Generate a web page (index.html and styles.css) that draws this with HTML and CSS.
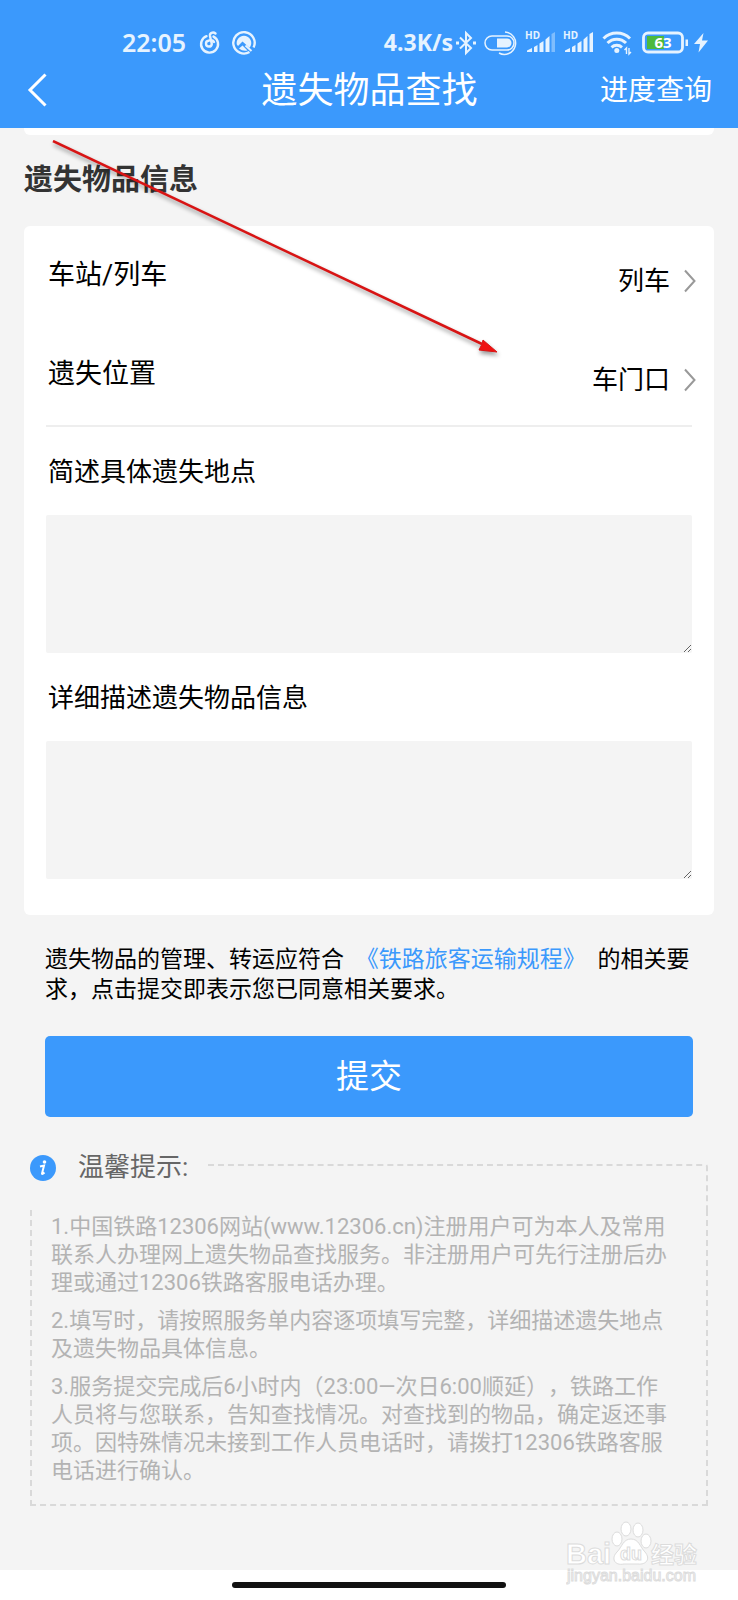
FILE: index.html
```html
<!DOCTYPE html>
<html lang="zh-CN">
<head>
  <title>遗失物品查找</title>
  <meta name="viewport" content="width=device-width, initial-scale=1.0">
  <meta charset="UTF-8">
  <link rel="stylesheet" href="styles.css">
</head>
<body>
  <header class="header">
    <div class="status-bar">
      <span class="status-text clock">22:05</span>
      <svg class="icon-music" width="20" height="24" viewBox="0 0 20 24" fill="none" stroke="currentColor" stroke-width="2.400" stroke-linecap="round">
        <path d="M6.500 5.200A8.500 8.500 0 1 0 13.500 5.600"/>
        <path d="M15.500 2.500C13 .5 9.400 2 10 5L11.800 13A2.900 2.900 0 1 1 8.500 9.800C10.500 8.600 13 9 14 11"/>
      </svg>
      <svg class="icon-app" width="24" height="24" viewBox="0 0 24 24" fill="none" stroke="currentColor">
        <path d="M17.500 21A10.700 10.700 0 1 1 21.600 16.500" stroke-width="2.400"/>
        <path d="M4.800 13.500A7.300 7.300 0 1 1 17.500 16.800L10.500 10.500L6 15Z" fill="currentColor" stroke="none"/>
        <path d="M7 17.500L10.500 14.500L15.500 19.500Q10.500 20.500 7 17.500Z" fill="currentColor" stroke="none"/>
        <path d="M13.500 14.500L19.500 20" stroke-width="2"/>
      </svg>
      <span class="status-text net-speed">4.3K/s</span>
      <svg class="icon-bluetooth" width="20" height="24" viewBox="0 0 20 24" fill="none" stroke="currentColor" stroke-width="2">
        <path d="M4 6.500L15 17L10 22V2L15 7L4 17.500"/>
        <path d="M0 10.500H3V13.500H0ZM17 10.500H20V13.500H17Z" fill="currentColor" stroke="none"/>
      </svg>
      <svg class="icon-switch" width="34" height="24" viewBox="0 0 34 24" fill="none" stroke="currentColor">
        <rect x="1" y="5" width="29" height="14" rx="7" stroke-width="1.500"/>
        <path d="M13 7.500H23A4.500 4.500 0 0 1 23 16.500H13Z" fill="currentColor" stroke="none"/>
        <path d="M21 1A11.200 11.200 0 1 1 15 22" stroke-width="1.500"/>
      </svg>
      <svg class="icon-signal" width="30" height="24" viewBox="0 0 30 24" fill="currentColor">
        <text x="-1" y="8" class="hd">HD</text>
        <path d="M1 21V19.500L6 17V21ZM8 21V16L11.500 14V21ZM13.500 21V12.500L17.500 10V21ZM19.500 21V8.500L23.500 5V21Z"/>
        <path d="M25.500 21V3L29 1V21Z" opacity=".4"/>
      </svg>
      <svg class="icon-signal" width="30" height="24" viewBox="0 0 30 24" fill="currentColor">
        <text x="-1" y="8" class="hd">HD</text>
        <path d="M1 21V19.500L6 17V21ZM8 21V16L11.500 14V21ZM13.500 21V12.500L17.500 10V21ZM19.500 21V8.500L23.500 5V21ZM25.500 21V3L29 1V21Z"/>
      </svg>
      <svg class="icon-wifi" width="30" height="24" viewBox="0 0 30 24" fill="none" stroke="currentColor" stroke-width="3">
        <path d="M1.500 7.500A19 19 0 0 1 28 7.500M5.500 12A13 13 0 0 1 24 12M9.500 16.300A8 8 0 0 1 20 16.300"/>
        <circle cx="14.800" cy="19.500" r="2.500" fill="currentColor" stroke="none"/>
        <path d="M24.500 23V17L22.500 19M27 17V23L29 21" stroke-width="1.400"/>
      </svg>
      <svg class="icon-battery" width="46" height="24" viewBox="0 0 46 24" fill="none">
        <rect x="5" y="5" width="17" height="13" fill="#4cb93c"/>
        <rect x="1.500" y="2" width="39" height="19" rx="4.500" stroke="currentColor" stroke-width="2.800"/>
        <path d="M43.500 8.500H46V15H43.500Z" fill="currentColor"/>
        <text x="21" y="17" text-anchor="middle" fill="#fff" class="level">63</text>
      </svg>
      <svg class="icon-bolt" width="14" height="24" viewBox="0 0 14 24" fill="currentColor">
        <path d="M9.500 2L0 13H6L4.500 21.500L14 9.500H8Z"/>
      </svg>
    </div>
    <nav class="nav">
      <button class="back-btn" title="返回">
        <svg width="20" height="34" viewBox="0 0 20 34" fill="none" stroke="currentColor" stroke-width="3"><path d="M18.500 1.500L3 17L18.500 32.500"/></svg>
      </button>
      <h1 class="nav-title">遗失物品查找</h1>
      <a class="nav-link" href="#progress">进度查询</a>
    </nav>
  </header>

  <main class="main">
    <div class="prev-card"></div>
    <h2 class="section-title">遗失物品信息</h2>

    <form class="card" id="lost-form">
      <div class="row">
        <label class="row-label" for="place">车站/列车</label>
        <button type="button" class="picker" id="place">
          列车
          <svg width="12" height="24" viewBox="0 0 12 24" fill="none" stroke="currentColor" stroke-width="2"><path d="M1 1.500L10.500 12L1 22.500"/></svg>
        </button>
      </div>
      <div class="row row-line">
        <label class="row-label" for="position">遗失位置</label>
        <button type="button" class="picker" id="position">
          车门口
          <svg width="12" height="24" viewBox="0 0 12 24" fill="none" stroke="currentColor" stroke-width="2"><path d="M1 1.500L10.500 12L1 22.500"/></svg>
        </button>
      </div>
      <div class="field">
        <label for="spot">简述具体遗失地点</label>
        <textarea id="spot"></textarea>
      </div>
      <div class="field">
        <label for="detail">详细描述遗失物品信息</label>
        <textarea id="detail"></textarea>
      </div>
    </form>

    <div class="submit-area">
      <p class="agreement">遗失物品的管理、转运应符合 <a href="#rules">《铁路旅客运输规程》</a> 的相关要求，点击提交即表示您已同意相关要求。</p>
      <button class="submit-btn" type="submit" form="lost-form">提交</button>
    </div>

    <section class="tips">
      <div class="tips-head">
        <svg class="info-icon" width="26" height="26" viewBox="0 0 26 26">
          <circle cx="13" cy="13" r="13" fill="#3b99fc"/>
          <circle cx="14.500" cy="7" r="1.800" fill="#fff"/>
          <path d="M10 11.500L14 10.500L12 18.500Q12 19.800 14.500 17.500" fill="none" stroke="#fff" stroke-width="2"/>
        </svg>
        <h3 class="tips-title">温馨提示:</h3>
        <div class="tips-line"></div>
      </div>
      <div class="tips-body">
        <p>1.中国铁路12306网站(www.12306.cn)注册用户可为本人及常用联系人办理网上遗失物品查找服务。非注册用户可先行注册后办理或通过12306铁路客服电话办理。</p>
        <p>2.填写时，请按照服务单内容逐项填写完整，详细描述遗失地点及遗失物品具体信息。</p>
        <p>3.服务提交完成后6小时内（23:00—次日6:00顺延），铁路工作人员将与您联系，告知查找情况。对查找到的物品，确定返还事项。因特殊情况未接到工作人员电话时，请拨打12306铁路客服电话进行确认。</p>
      </div>
    </section>
  </main>

  <footer class="home-area">
    <div class="home-bar"></div>
    <svg class="watermark" width="136" height="66" viewBox="0 0 136 66">
      <g fill="#fff" stroke="#dcdcdc">
        <text x="0" y="43" class="wm-name">Bai</text>
        <ellipse cx="51" cy="18" rx="5" ry="7"/>
        <ellipse cx="60" cy="8" rx="5" ry="7"/>
        <ellipse cx="72" cy="9" rx="5" ry="7"/>
        <ellipse cx="80" cy="20" rx="5" ry="7"/>
        <path d="M65 18C73 18 74 26 79 31C85 38 80 44 72 43H58C48 45 45 37 51 31C56 26 57 18 65 18Z"/>
        <text x="54" y="39" class="wm-du">du</text>
        <text x="85" y="42" class="wm-cn">经验</text>
        <text x="1" y="60" class="wm-url">jingyan.baidu.com</text>
      </g>
    </svg>
  </footer>

  <!-- Pointer from the section title to the position picker -->
  <svg class="pointer" width="450" height="222" viewBox="0 0 450 222">
    <path d="M1 1L430 204" stroke="#d81414" stroke-width="2.500"/>
    <path d="M445 212L427 210L430 204L431 200Z" fill="#f01010" stroke="#d81414"/>
  </svg>
</body>
</html>
```

FILE: styles.css
```css
* {
  box-sizing: border-box;
}

body {
  position: relative;
  margin: 0;
  background: #fff;
  color: #000;
  font-family: Roboto, "Noto Sans CJK SC", sans-serif;
  font-size: 26px;
  line-height: 30px;
  text-spacing-trim: space-all;
}

h1, h2, h3, p {
  margin: 0;
}

button {
  padding: 0;
  border: none;
  background: none;
  color: inherit;
  font: inherit;
  cursor: pointer;
}

/* Header */
.header {
  padding: 26px 0 8px;
  background: #3b99fc;
  color: #fff;
}
.status-bar {
  display: flex;
  align-items: center;
  height: 34px;
  padding: 0 30px 0 122px;
  color: #e6f3ff;
}
.status-bar svg {
  overflow: visible;
}
.status-text {
  padding-bottom: 2px;
  font-family: "Noto Sans", sans-serif;
  font-size: 23px;
  font-weight: 700;
}
.clock {
  font-size: 25px;
  font-weight: 600;
}
.net-speed {
  margin-left: auto;
}
.icon-music {
  margin-left: 14px;
}
.icon-app {
  margin-left: 12px;
}
.icon-bluetooth {
  margin-left: 3px;
}
.icon-switch,
.icon-signal,
.icon-wifi {
  margin-left: 8px;
}
.icon-battery {
  margin-left: 10px;
}
.icon-bolt {
  margin-left: 6px;
}
.hd {
  font-family: "Noto Sans", sans-serif;
  font-size: 10px;
  font-weight: 700;
}
.level {
  font-family: "Noto Sans", sans-serif;
  font-size: 15px;
  font-weight: 700;
}
.nav {
  display: grid;
  grid-template-columns: 1fr auto 1fr;
  align-items: center;
  height: 60px;
  padding: 0 26px 0 27px;
}
.back-btn {
  display: flex;
  justify-self: start;
}
.nav-title {
  padding-top: 2px;
  font-size: 36px;
  font-weight: 400;
  line-height: 40px;
}
.nav-link {
  padding-top: 2px;
  justify-self: end;
  color: #fff;
  font-size: 28px;
  text-decoration: none;
}

/* Form */
.main {
  padding: 0 24px 64px;
  background: #f4f4f4;
}
.prev-card {
  height: 7px;
  border-radius: 0 0 6px 6px;
  background: #fff;
}
.section-title {
  padding: 30px 0 31px;
  color: #333;
  font-size: 29px;
  font-weight: 700;
}
.card {
  padding: 1px 22px 36px;
  border-radius: 6px;
  background: #fff;
}
.row {
  display: flex;
  align-items: center;
  justify-content: space-between;
  height: 100px;
  padding-top: 2px;
}
.row-line {
  border-bottom: 2px solid #eee;
}
.row-label {
  padding: 0 0 6px 2px;
  font-size: 27px;
}
.picker {
  display: flex;
  align-items: center;
  gap: 14px;
  padding-top: 6px;
}
.picker svg {
  margin-right: -4px;
  color: #999;
}
.field {
  display: flex;
  flex-direction: column;
  gap: 28px;
  padding-top: 30px;
}
.field label {
  padding-left: 2px;
}
.field textarea {
  height: 138px;
  padding: 12px;
  border: none;
  border-radius: 2px;
  background: #f4f4f4;
  font: inherit;
  resize: vertical;
}

/* Agreement and submit */
.submit-area {
  padding: 30px 21px 0;
}
.agreement {
  font-size: 23px;
}
.agreement a {
  margin: 0 6px;
  color: #3b99fc;
  text-decoration: none;
}
.submit-btn {
  width: 100%;
  height: 81px;
  margin-top: 31px;
  border-radius: 5px;
  background: #3b99fc;
  color: #fff;
  font-size: 33px;
}

/* Tips */
.tips {
  margin: 33px 6px 0;
}
.tips-head {
  display: flex;
  align-items: flex-start;
}
.info-icon {
  margin-top: 5px;
}
.tips-title {
  padding-top: 2px;
  margin-left: 22px;
  color: #666;
  font-size: 26px;
  font-weight: 400;
}
.tips-line {
  flex: 1;
  height: 46px;
  margin: 14px 0 0 20px;
  border: 2px dashed #d9d9d9;
  border-width: 2px 2px 0 0;
  border-radius: 0 3px 0 0;
}
.tips-body {
  padding: 3px 32px 19px 19px;
  border: 2px dashed #d9d9d9;
  border-top: none;
  color: #b3b3b3;
  font-size: 22px;
  line-height: 28px;
}
.tips-body p + p {
  margin-top: 10px;
}

/* Bottom of the screen */
.home-area {
  position: relative;
  height: 30px;
  padding-top: 12px;
}
.home-bar {
  width: 37%;
  height: 6px;
  margin: 0 auto;
  border-radius: 3px;
  background: #111;
}
.watermark {
  position: absolute;
  right: 36px;
  bottom: 13px;
}
.wm-name,
.wm-du {
  font-family: "Liberation Sans", sans-serif;
  font-size: 29px;
  font-weight: 700;
}
.wm-du {
  font-size: 18px;
}
.wm-cn {
  font-size: 23px;
  font-weight: 700;
}
.wm-url {
  font-family: "Liberation Sans", sans-serif;
  font-size: 16px;
}
.pointer {
  position: absolute;
  top: 140px;
  left: 52px;
  filter: drop-shadow(1px 3px 2px rgba(0,0,0,0.4));
  pointer-events: none;
}
```
